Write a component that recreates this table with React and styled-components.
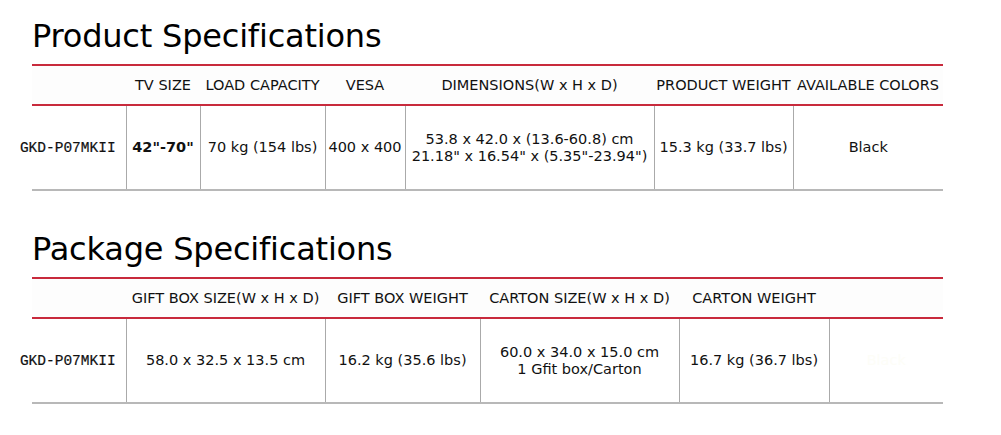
import React from "react";
import styled, { createGlobalStyle } from "styled-components";

const GlobalStyle = createGlobalStyle`
  html, body {
    margin: 0;
    padding: 0;
    background: #ffffff;
  }
  body {
    font-family: "DejaVu Sans", Verdana, sans-serif;
    color: #111;
  }
`;

const Page = styled.div`
  width: 1001px;
  padding: 17px 0 0 32px;
  box-sizing: border-box;
`;

const Section = styled.section`
  margin-bottom: ${({ gap }) => gap || 0}px;
`;

const Title = styled.h2`
  margin: 0 0 9px;
  font-size: 32px;
  font-weight: normal;
  line-height: 38px;
  color: #000;
  letter-spacing: -0.2px;
`;

const Table = styled.table`
  width: 911px;
  border-collapse: collapse;
  table-layout: fixed;
`;

const HeadRow = styled.tr`
  height: 40px;
  border-top: 2px solid #c82a3c;
  border-bottom: 2px solid #c82a3c;
  background: #fdfdfd;
`;

const HeadCell = styled.th`
  padding: 0;
  font-size: 14.5px;
  font-weight: normal;
  white-space: nowrap;
  text-align: center;
  color: #111;
`;

const BodyRow = styled.tr`
  height: 85px;
  border-bottom: 2px solid #b8b8b8;
`;

const Cell = styled.td`
  padding: 0;
  font-size: 14.5px;
  line-height: 17px;
  text-align: center;
  white-space: nowrap;
  border-left: 1.5px solid #aaaaaa;
  font-weight: ${({ bold }) => (bold ? "bold" : "normal")};
  color: ${({ ghost }) => (ghost ? "#fdfdf7" : "#111")};
`;

const ModelCell = styled.td`
  padding: 0;
  font-family: "Liberation Mono", "Courier New", monospace;
  font-size: 14.5px;
  text-align: center;
  white-space: nowrap;
  color: #111;
  overflow: visible;
`;

const ModelText = styled.span`
  display: inline-block;
  margin-left: -22px;
  -webkit-text-stroke: 0.2px #111;
`;

const productCols = [94, 74, 125, 80, 249, 139, 150];
const packageCols = [94, 199, 155, 199, 150, 114];

const productHead = [
  "",
  "TV SIZE",
  "LOAD CAPACITY",
  "VESA",
  "DIMENSIONS(W x H x D)",
  "PRODUCT WEIGHT",
  "AVAILABLE COLORS",
];

const packageHead = [
  "",
  "GIFT BOX SIZE(W x H x D)",
  "GIFT BOX WEIGHT",
  "CARTON SIZE(W x H x D)",
  "CARTON WEIGHT",
  "",
];

const SpecTable = ({ cols, head, children }) => (
  <Table>
    <colgroup>
      {cols.map((w, i) => (
        <col key={i} style={{ width: w }} />
      ))}
    </colgroup>
    <thead>
      <HeadRow>
        {head.map((h, i) => (
          <HeadCell key={i}>{h}</HeadCell>
        ))}
      </HeadRow>
    </thead>
    <tbody>
      <BodyRow>{children}</BodyRow>
    </tbody>
  </Table>
);

export default function App() {
  return (
    <Page>
      <GlobalStyle />
      <Section gap={39}>
        <Title>Product Specifications</Title>
        <SpecTable cols={productCols} head={productHead}>
          <ModelCell>
            <ModelText>GKD-P07MKII</ModelText>
          </ModelCell>
          <Cell bold>42"-70"</Cell>
          <Cell>70 kg (154 lbs)</Cell>
          <Cell>400 x 400</Cell>
          <Cell>
            53.8 x 42.0 x (13.6-60.8) cm
            <br />
            21.18" x 16.54" x (5.35"-23.94")
          </Cell>
          <Cell>15.3 kg (33.7 lbs)</Cell>
          <Cell>Black</Cell>
        </SpecTable>
      </Section>
      <Section>
        <Title>Package Specifications</Title>
        <SpecTable cols={packageCols} head={packageHead}>
          <ModelCell>
            <ModelText>GKD-P07MKII</ModelText>
          </ModelCell>
          <Cell>58.0 x 32.5 x 13.5 cm</Cell>
          <Cell>16.2 kg (35.6 lbs)</Cell>
          <Cell>
            60.0 x 34.0 x 15.0 cm
            <br />1 Gfit box/Carton
          </Cell>
          <Cell>16.7 kg (36.7 lbs)</Cell>
          <Cell ghost>Black</Cell>
        </SpecTable>
      </Section>
    </Page>
  );
}
